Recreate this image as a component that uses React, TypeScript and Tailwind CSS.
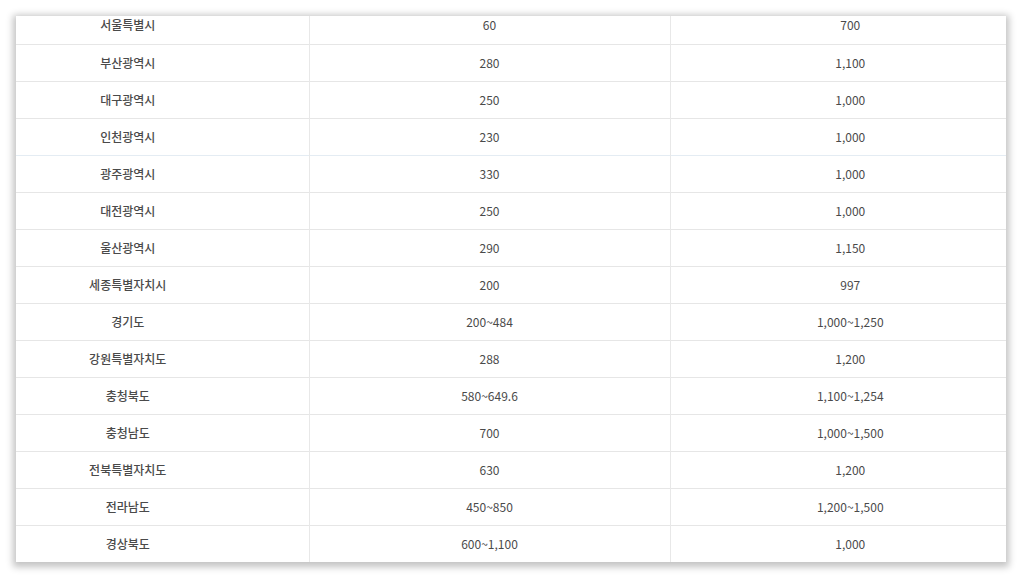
const rows: [string, string, string][] = [
  ["서울특별시", "60", "700"],
  ["부산광역시", "280", "1,100"],
  ["대구광역시", "250", "1,000"],
  ["인천광역시", "230", "1,000"],
  ["광주광역시", "330", "1,000"],
  ["대전광역시", "250", "1,000"],
  ["울산광역시", "290", "1,150"],
  ["세종특별자치시", "200", "997"],
  ["경기도", "200~484", "1,000~1,250"],
  ["강원특별자치도", "288", "1,200"],
  ["충청북도", "580~649.6", "1,100~1,254"],
  ["충청남도", "700", "1,000~1,500"],
  ["전북특별자치도", "630", "1,200"],
  ["전라남도", "450~850", "1,200~1,500"],
  ["경상북도", "600~1,100", "1,000"],
];

export default function App() {
  return (
    <div className="h-[581px] w-[1024px] bg-white pl-4 pt-4">
      <div className="h-[546px] w-[990px] overflow-hidden bg-white shadow-[0_2px_7px_3px_rgba(0,0,0,0.24)]">
        <table
          className="-mt-[9px] -ml-[69px] w-[1083px] min-w-[1083px] table-fixed border-collapse text-[12px] text-[#4a4a4a]"
          style={{ fontFamily: '"Noto Sans CJK KR", "Noto Sans", sans-serif' }}
        >
          <colgroup>
            <col className="w-[362px]" />
            <col className="w-[361px]" />
            <col className="w-[360px]" />
          </colgroup>
          <tbody>
            {rows.map(([region, a, b], i) => (
              <tr
                key={region}
                className={`h-[37px] border-b ${
                  i === 3 || i === 14 ? "border-[#e4ecf3]" : "border-[#e6e6e6]"
                }`}
              >
                <td className="border-r border-[#e8e8e8] p-0 text-center font-medium">{region}</td>
                <td className="border-r border-[#e8e8e8] p-0 text-center">{a}</td>
                <td className="p-0 text-center">{b}</td>
              </tr>
            ))}
          </tbody>
        </table>
      </div>
    </div>
  );
}
